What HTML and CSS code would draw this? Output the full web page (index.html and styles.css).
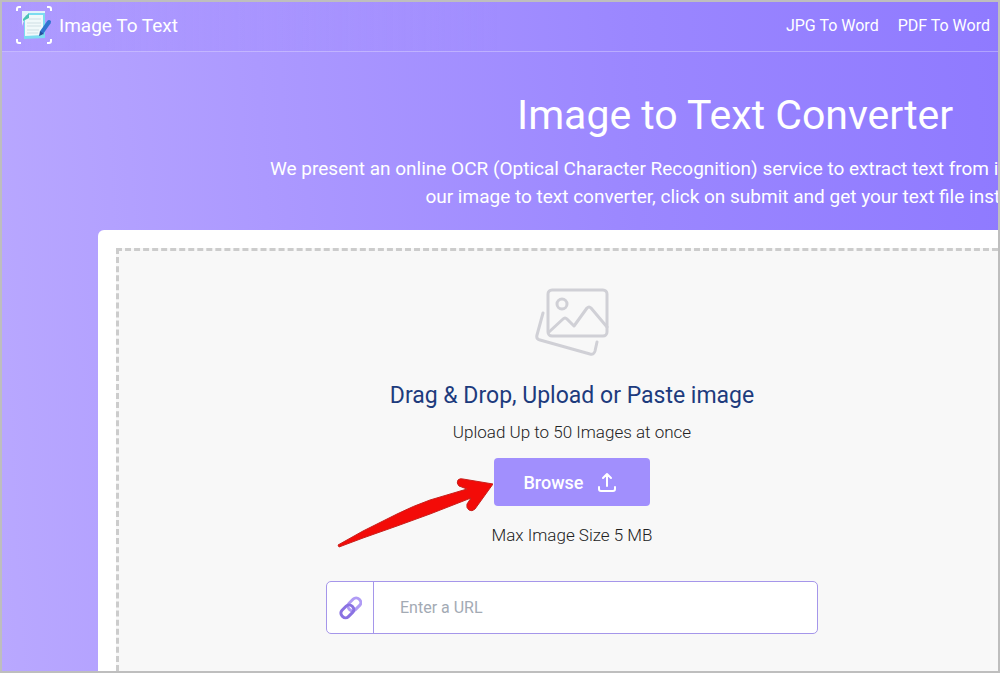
FILE: index.html
```html
<!DOCTYPE html>
<html lang="en">
<head>
    <meta charset="UTF-8">
    <meta name="viewport" content="width=device-width, initial-scale=1.0">
    <title>Image to Text Converter</title>

    <link rel="stylesheet" href="styles.css">

</head>
<body>

    <header class="navbar">
        <a href="#" class="brand">
            <svg class="logo" viewBox="0 0 36 38" aria-hidden="true">
                <path d="M1 5V3q0-2 2-2h2M31 1h2q2 0 2 2v2M35 33v2q0 2-2 2h-2M5 37H3q-2 0-2-2v-2" fill="none" stroke="#fff" stroke-width="2"/>
                <path d="M6 5h23v4H10L6 20z" fill="#e4f3fb"/>
                <path d="M13 7h16v25l-21 1V12z" fill="#7ddcf0"/>
                <path d="M13 9h14v20l-18 1V13z" fill="#f0f9fa"/>
                <path d="M13 7v5l-6 3v-2z" fill="#4cc4b4"/>
                <path d="M13 13h12M11 17h14M11 20h14M11 24h12M11 27h11" stroke="#cfdfe4" stroke-width="1"/>
                <path d="M33 16L26 26" stroke="#2f74cf" stroke-width="4" stroke-linecap="round"/>
                <path d="M24 25l4 3-5 2z" fill="#24509c"/>
            </svg>
            <span>Image To Text</span>
        </a>
        <nav class="links">
            <a href="#">JPG To Word</a>
            <a href="#">PDF To Word</a>
        </nav>
    </header>

    <main>
        <div class="intro">
            <h1>Image to Text Converter</h1>
            <p>We present an online OCR (Optical Character Recognition) service to extract text from images. Upload photo to<br>
            our image to text converter, click on submit and get your text file instantly.</p>
        </div>

        <div class="card">
            <div class="dropzone">
                <div class="upload">
                    <svg class="pictures" viewBox="0 0 74 68" fill="none" stroke="#d0d0d6" stroke-width="3" stroke-linecap="round" stroke-linejoin="round" aria-hidden="true">
                        <rect x="13" y="2" width="59" height="46" rx="4"/>
                        <circle cx="27" cy="16" r="5"/>
                        <path d="M14 44l14-13q2-2 4 0l7 7 13-18q2-2 4 0l16 19"/>
                        <path d="M8 25L2 47q-1 4 3 5l50 14q4 1 5-3l2-9"/>
                    </svg>
                    <h2>Drag &amp; Drop, Upload or Paste image</h2>
                    <p class="note">Upload Up to 50 Images at once</p>
                    <div class="browse-row">
                        <button type="button" class="browse">
                            Browse
                            <svg class="up" viewBox="0 0 18 20" fill="none" stroke="#fff" stroke-width="2" stroke-linecap="round" stroke-linejoin="round" aria-hidden="true">
                                <path d="M9 14V2M5 6l4-4 4 4M1 15v2q0 2 2 2h12q2 0 2-2v-2"/>
                            </svg>
                        </button>
                        <svg class="arrow" viewBox="0 0 156 70" aria-hidden="true">
                            <path d="M1 67L26 53L60 36Q76 28 93 22L130 11L122 8q-3-3-1-6q2-2 5-1L156 6L138 31q-3 3-6 1t-2-6l4-6L93 36L60 48L26 60L2 69z" fill="#f30b08" stroke="#c8201c" stroke-width="1"/>
                        </svg>
                    </div>
                    <p class="note">Max Image Size 5 MB</p>
                    <div class="url">
                        <label for="url" aria-label="Image URL">
                            <svg class="chain" viewBox="0 0 24 24" fill="none" stroke-width="3" aria-hidden="true">
                                <rect x="9" y="4" width="14" height="9" rx="4" transform="rotate(-45 16 8)" stroke="#b09bf5"/>
                                <rect x="2" y="11" width="14" height="9" rx="4" transform="rotate(-45 9 15)" stroke="#8a72e2"/>
                            </svg>
                        </label>
                        <input type="text" id="url" placeholder="Enter a URL">
                    </div>
                </div>
            </div>
        </div>
    </main>

</body>
</html>
```
FILE: styles.css
```css
*{
    box-sizing: border-box;
}

body{
    margin: 0;
    height: 100vh;
    display: flex;
    flex-direction: column;
    overflow: hidden;
    border: 2px solid #bebebe;
    background: linear-gradient(87deg, #b9a8ff, #ac99ff 28%, #9b87ff 64%, #8f7aff);
    font-family: Roboto, sans-serif;
    color: white;
}

h1, h2, p{
    margin: 0;
    font-weight: 400;
}

.navbar{
    display: flex;
    justify-content: space-between;
    align-items: center;
    height: 50px;
    padding: 0 8px 4px 14px;
    border-bottom: 1px solid rgba(255, 255, 255, .3);
    background: linear-gradient(90deg, rgba(150, 125, 255, .3), rgba(150, 125, 255, 0) 50%);
}

.navbar a{
    color: white;
    text-decoration: none;
}

.brand{
    display: flex;
    align-items: center;
    gap: 7px;
    font-size: 19px;
}

.brand span{
    padding-top: 2px;
}

.logo{
    width: 36px;
    height: 38px;
}

.links{
    display: flex;
    gap: 19px;
    padding-top: 2px;
    font-size: 16px;
}

main{
    flex: 1;
    display: flex;
    flex-direction: column;
    overflow: hidden;
}

/* one wide centred block, runs past the right edge */
.intro{
    width: max-content;
    margin-left: 268px;
    padding: 37px 0 19px;
    text-align: center;
    white-space: nowrap;
}

.intro h1{
    font-size: 41px;
    line-height: 52px;
}

.intro p{
    margin-top: 14px;
    font-size: 19px;
    line-height: 28px;
}

.card{
    flex: 1;
    display: flex;
    margin-left: 96px;
    padding: 18px 0 0 18px;
    background: white;
    border-top-left-radius: 6px;
}

.dropzone{
    flex: 1;
    border-top: 3px dashed #ccc;
    border-left: 3px dashed #ccc;
    background: #f8f8f8;
}

.upload{
    width: 492px;
    margin-left: 207px;
    padding-top: 37px;
    display: flex;
    flex-direction: column;
    align-items: center;
}

.pictures{
    width: 74px;
    height: 68px;
}

.upload h2{
    margin-top: 24px;
    font-size: 23px;
    line-height: 32px;
    color: #1d3b7d;
}

.note{
    margin: 8px 0;
    font-size: 17px;
    line-height: 24px;
    font-weight: 300;
    color: #222;
}

.browse-row{
    position: relative;
    margin: 6px 0 9px;
}

.browse{
    display: flex;
    align-items: center;
    justify-content: center;
    gap: 15px;
    width: 156px;
    height: 48px;
    padding: 0 4px 0 0;
    border: 0;
    border-radius: 4px;
    background: #a18ffd;
    color: white;
    font-family: inherit;
    font-size: 18px;
    font-weight: 500;
    cursor: pointer;
}

.up{
    width: 18px;
    height: 20px;
}

/* pointer laid over the drop area */
.arrow{
    position: absolute;
    top: 20px;
    right: 157px;
    width: 156px;
    height: 70px;
}

.url{
    display: flex;
    width: 100%;
    height: 53px;
    margin-top: 26px;
    border: 1px solid #a596ea;
    border-radius: 5px;
    background: white;
}

.url label{
    display: flex;
    align-items: center;
    justify-content: center;
    width: 47px;
    border-right: 1px solid #a596ea;
}

.chain{
    width: 24px;
    height: 24px;
}

.url input{
    flex: 1;
    padding: 0 26px;
    border: 0;
    outline: 0;
    background: none;
    font-family: inherit;
    font-size: 16px;
}

.url input::placeholder{
    color: #a3aab4;
}
```
